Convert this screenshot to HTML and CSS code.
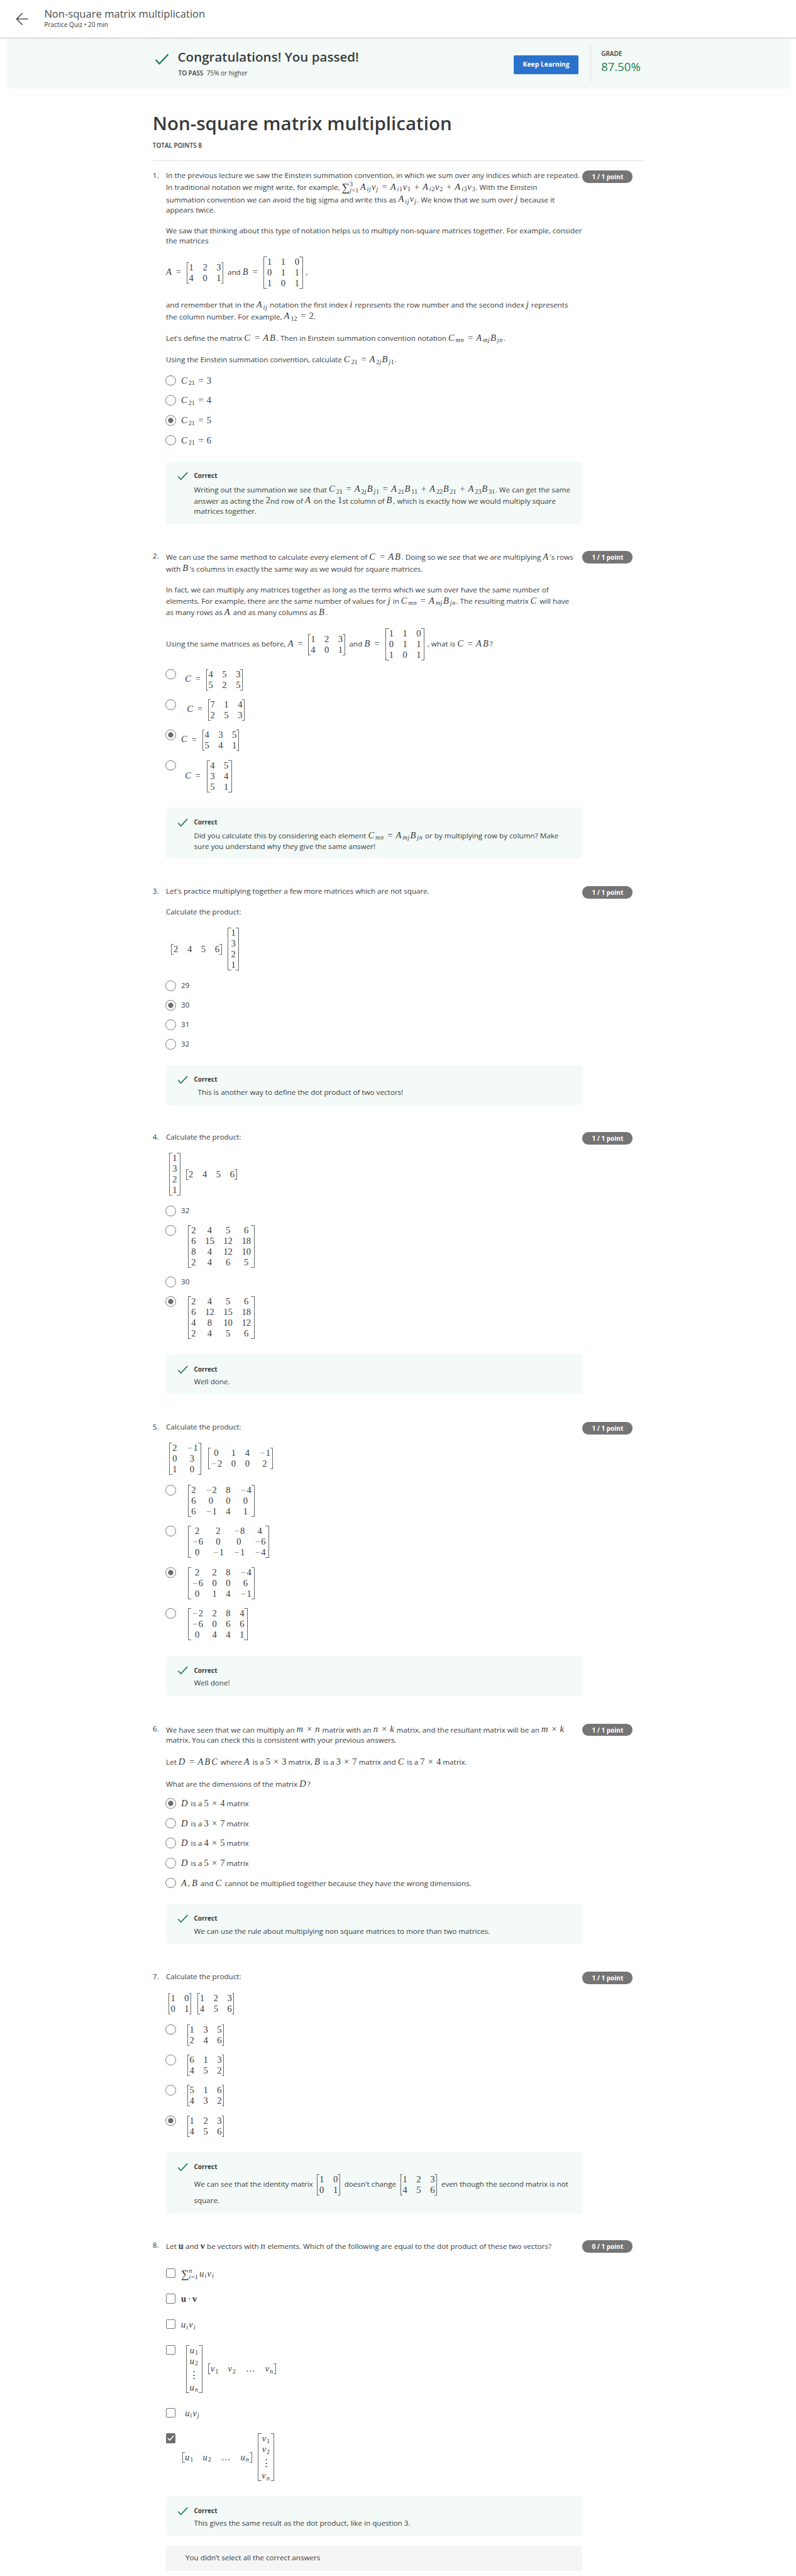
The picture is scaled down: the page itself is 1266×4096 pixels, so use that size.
FILE: index.html
```html
<!DOCTYPE html>
<html lang="en">
<head>
<meta charset="utf-8">
<title>Non-square matrix multiplication</title>
<link rel="stylesheet" href="styles.css">
</head>
<body>
<svg width="0" height="0" class="defs"><symbol id="check" viewBox="0 0 18 15"><path d="M1 8.2 L5.6 13.2 L17 1.2" fill="none" stroke="currentColor" stroke-width="1.8"/></symbol></svg>
<div class="page">
  <header class="topbar">
    <svg class="back" viewBox="0 0 22 22"><path d="M11.5 1 L1.5 11 L11.5 21 M1.5 11 H21.5" fill="none" stroke="currentColor" stroke-width="1.4"/></svg>
    <div>
      <div class="topbar-title">Non-square matrix multiplication</div>
      <div class="topbar-sub">Practice Quiz • 20 min</div>
    </div>
  </header>

  <div class="banner">
    <svg class="banner-check"><use href="#check"/></svg>
    <div class="banner-text">
      <div class="banner-title">Congratulations! You passed!</div>
      <div class="banner-sub"><b>TO PASS</b> 75% or higher</div>
    </div>
    <div class="button">Keep Learning</div>
    <div class="grade"><div class="grade-label">GRADE</div><div class="grade-value">87.50%</div></div>
  </div>

  <main>
    <h1>Non-square matrix multiplication</h1>
    <div class="total">TOTAL POINTS 8</div>

    <section class="question q1">
      <div class="num">1.</div>
      <div class="body">
        <div class="prompt">
          <p>In the previous lecture we saw the Einstein summation convention, in which we sum over any indices which are repeated.<br>In traditional notation we might write, for example, <span class="math">∑_{j=1}^3A_{ij}v_j=A_{i1}v_1+A_{i2}v_2+A_{i3}v_3</span>. With the Einstein<br>summation convention we can avoid the big sigma and write this as <span class="math">A_{ij}v_j</span>. We know that we sum over <span class="math">j</span> because it<br>appears twice.</p>
          <p>We saw that thinking about this type of notation helps us to multiply non-square matrices together. For example, consider<br>the matrices</p>
          <p><span class="math">A=[1 2 3;4 0 1]</span> and <span class="math">B=[1 1 0;0 1 1;1 0 1]</span>,</p>
          <p>and remember that in the <span class="math">A_{ij}</span> notation the first index <span class="math">i</span> represents the row number and the second index <span class="math">j</span> represents<br>the column number. For example, <span class="math">A_{12}=2</span>.</p>
          <p>Let's define the matrix <span class="math">C=AB</span>. Then in Einstein summation convention notation <span class="math">C_{mn}=A_{mj}B_{jn}</span>.</p>
          <p>Using the Einstein summation convention, calculate <span class="math">C_{21}=A_{2j}B_{j1}</span>.</p>
        </div>
        <div class="options">
          <div class="opt"><i class="radio"></i><div class="label"><span class="math">C_{21}=3</span></div></div>
          <div class="opt"><i class="radio"></i><div class="label"><span class="math">C_{21}=4</span></div></div>
          <div class="opt"><i class="radio on"></i><div class="label"><span class="math">C_{21}=5</span></div></div>
          <div class="opt"><i class="radio"></i><div class="label"><span class="math">C_{21}=6</span></div></div>
        </div>
        <div class="feedback"><svg><use href="#check"/></svg><div><b>Correct</b><div>Writing out the summation we see that <span class="math">C_{21}=A_{2j}B_{j1}=A_{21}B_{11}+A_{22}B_{21}+A_{23}B_{31}</span>. We can get the same<br>answer as acting the <span class="math">2</span>nd row of <span class="math">A</span> on the <span class="math">1</span>st column of <span class="math">B</span>, which is exactly how we would multiply square<br>matrices together.</div></div></div>
      </div>
      <div class="points">1 / 1 point</div>
    </section>

    <section class="question q2">
      <div class="num">2.</div>
      <div class="body">
        <div class="prompt">
          <p>We can use the same method to calculate every element of <span class="math">C=AB</span>. Doing so we see that we are multiplying <span class="math">A</span>'s rows<br>with <span class="math">B</span>'s columns in exactly the same way as we would for square matrices.</p>
          <p>In fact, we can multiply any matrices together as long as the terms which we sum over have the same number of<br>elements. For example, there are the same number of values for <span class="math">j</span> in <span class="math">C_{mn}=A_{mj}B_{jn}</span>. The resulting matrix <span class="math">C</span> will have<br>as many rows as <span class="math">A</span> and as many columns as <span class="math">B</span>.</p>
          <p>Using the same matrices as before, <span class="math">A=[1 2 3;4 0 1]</span> and <span class="math">B=[1 1 0;0 1 1;1 0 1]</span>, what is <span class="math">C=AB</span>?</p>
        </div>
        <div class="options">
          <div class="opt"><i class="radio"></i><div class="label">&nbsp; <span class="math">C=[4 5 3;5 2 5]</span></div></div>
          <div class="opt"><i class="radio"></i><div class="label">&nbsp; &nbsp;<span class="math">C=[7 1 4;2 5 3]</span></div></div>
          <div class="opt"><i class="radio on"></i><div class="label"><span class="math">C=[4 3 5;5 4 1]</span></div></div>
          <div class="opt"><i class="radio"></i><div class="label">&nbsp; <span class="math">C=[4 5;3 4;5 1]</span></div></div>
        </div>
        <div class="feedback"><svg><use href="#check"/></svg><div><b>Correct</b><div>Did you calculate this by considering each element <span class="math">C_{mn}=A_{mj}B_{jn}</span> or by multiplying row by column? Make<br>sure you understand why they give the same answer!</div></div></div>
      </div>
      <div class="points">1 / 1 point</div>
    </section>

    <section class="question q3">
      <div class="num">3.</div>
      <div class="body">
        <div class="prompt">
          <p>Let's practice multiplying together a few more matrices which are not square.</p>
          <p>Calculate the product:</p>
          <p>&nbsp; <span class="math">[2 4 5 6] [1;3;2;1]</span></p>
        </div>
        <div class="options">
          <div class="opt"><i class="radio"></i><div class="label">29</div></div>
          <div class="opt"><i class="radio on"></i><div class="label">30</div></div>
          <div class="opt"><i class="radio"></i><div class="label">31</div></div>
          <div class="opt"><i class="radio"></i><div class="label">32</div></div>
        </div>
        <div class="feedback"><svg><use href="#check"/></svg><div><b>Correct</b><div>&nbsp; This is another way to define the dot product of two vectors!</div></div></div>
      </div>
      <div class="points">1 / 1 point</div>
    </section>

    <section class="question q4">
      <div class="num">4.</div>
      <div class="body">
        <div class="prompt">
          <p>Calculate the product:</p>
          <p><span class="math">[1;3;2;1] [2 4 5 6]</span></p>
        </div>
        <div class="options">
          <div class="opt"><i class="radio"></i><div class="label">32</div></div>
          <div class="opt"><i class="radio"></i><div class="label">&nbsp; <span class="math">[2 4 5 6;6 15 12 18;8 4 12 10;2 4 6 5]</span></div></div>
          <div class="opt"><i class="radio"></i><div class="label">30</div></div>
          <div class="opt"><i class="radio on"></i><div class="label">&nbsp; <span class="math">[2 4 5 6;6 12 15 18;4 8 10 12;2 4 5 6]</span></div></div>
        </div>
        <div class="feedback"><svg><use href="#check"/></svg><div><b>Correct</b><div>Well done.</div></div></div>
      </div>
      <div class="points">1 / 1 point</div>
    </section>

    <section class="question q5">
      <div class="num">5.</div>
      <div class="body">
        <div class="prompt">
          <p>Calculate the product:</p>
          <p><span class="math">[2 −1;0 3;1 0] [0 1 4 −1;−2 0 0 2]</span></p>
        </div>
        <div class="options">
          <div class="opt"><i class="radio"></i><div class="label">&nbsp; <span class="math">[2 −2 8 −4;6 0 0 0;6 −1 4 1]</span></div></div>
          <div class="opt"><i class="radio"></i><div class="label">&nbsp; <span class="math">[2 2 −8 4;−6 0 0 −6;0 −1 −1 −4]</span></div></div>
          <div class="opt"><i class="radio on"></i><div class="label">&nbsp; <span class="math">[2 2 8 −4;−6 0 0 6;0 1 4 −1]</span></div></div>
          <div class="opt"><i class="radio"></i><div class="label">&nbsp; <span class="math">[−2 2 8 4;−6 0 6 6;0 4 4 1]</span></div></div>
        </div>
        <div class="feedback"><svg><use href="#check"/></svg><div><b>Correct</b><div>Well done!</div></div></div>
      </div>
      <div class="points">1 / 1 point</div>
    </section>

    <section class="question q6">
      <div class="num">6.</div>
      <div class="body">
        <div class="prompt">
          <p>We have seen that we can multiply an <span class="math">m×n</span> matrix with an <span class="math">n×k</span> matrix, and the resultant matrix will be an <span class="math">m×k</span><br>matrix. You can check this is consistent with your previous answers.</p>
          <p>Let <span class="math">D=ABC</span> where <span class="math">A</span> is a <span class="math">5×3</span> matrix, <span class="math">B</span> is a <span class="math">3×7</span> matrix and <span class="math">C</span> is a <span class="math">7×4</span> matrix.</p>
          <p>What are the dimensions of the matrix <span class="math">D</span>?</p>
        </div>
        <div class="options">
          <div class="opt"><i class="radio on"></i><div class="label"><span class="math">D</span> is a <span class="math">5×4</span> matrix</div></div>
          <div class="opt"><i class="radio"></i><div class="label"><span class="math">D</span> is a <span class="math">3×7</span> matrix</div></div>
          <div class="opt"><i class="radio"></i><div class="label"><span class="math">D</span> is a <span class="math">4×5</span> matrix</div></div>
          <div class="opt"><i class="radio"></i><div class="label"><span class="math">D</span> is a <span class="math">5×7</span> matrix</div></div>
          <div class="opt"><i class="radio"></i><div class="label"><span class="math">A</span>, <span class="math">B</span> and <span class="math">C</span> cannot be multiplied together because they have the wrong dimensions.</div></div>
        </div>
        <div class="feedback"><svg><use href="#check"/></svg><div><b>Correct</b><div>We can use the rule about multiplying non square matrices to more than two matrices.</div></div></div>
      </div>
      <div class="points">1 / 1 point</div>
    </section>

    <section class="question q7">
      <div class="num">7.</div>
      <div class="body">
        <div class="prompt">
          <p>Calculate the product:</p>
          <p><span class="math">[1 0;0 1] [1 2 3;4 5 6]</span></p>
        </div>
        <div class="options">
          <div class="opt"><i class="radio"></i><div class="label">&nbsp; <span class="math">[1 3 5;2 4 6]</span></div></div>
          <div class="opt"><i class="radio"></i><div class="label">&nbsp; <span class="math">[6 1 3;4 5 2]</span></div></div>
          <div class="opt"><i class="radio"></i><div class="label">&nbsp; <span class="math">[5 1 6;4 3 2]</span></div></div>
          <div class="opt"><i class="radio on"></i><div class="label">&nbsp; <span class="math">[1 2 3;4 5 6]</span></div></div>
        </div>
        <div class="feedback"><svg><use href="#check"/></svg><div><b>Correct</b><div>We can see that the identity matrix <span class="math">[1 0;0 1]</span> doesn't change <span class="math">[1 2 3;4 5 6]</span> even though the second matrix is not<br>square.</div></div></div>
      </div>
      <div class="points">1 / 1 point</div>
    </section>

    <section class="question q8">
      <div class="num">8.</div>
      <div class="body">
        <div class="prompt">
          <p>Let <span class="math">*u</span> and <span class="math">*v</span> be vectors with <span class="math">n</span> elements. Which of the following are equal to the dot product of these two vectors?</p>
        </div>
        <div class="options">
          <div class="opt"><i class="box"></i><div class="label"><span class="math">∑_{i=1}^nu_iv_i</span></div></div>
          <div class="opt"><i class="box"></i><div class="label"><span class="math">*u·*v</span></div></div>
          <div class="opt"><i class="box"></i><div class="label"><span class="math">u_iv_i</span></div></div>
          <div class="opt"><i class="box"></i><div class="label">&nbsp;<span class="math">[u_1;u_2;⋮;u_n] [v_1 v_2 … v_n]</span></div></div>
          <div class="opt"><i class="box"></i><div class="label">&nbsp; <span class="math">u_iv_j</span></div></div>
          <div class="opt"><i class="box on"><svg viewBox="0 0 16 16"><path d="M3 8.5 L6.5 12 L13.5 4" fill="none" stroke="#fff" stroke-width="1.6"/></svg></i><div class="label"><span class="math">[u_1 u_2 … u_n] [v_1;v_2;⋮;v_n]</span></div></div>
        </div>
        <div class="feedback"><svg><use href="#check"/></svg><div><b>Correct</b><div>This gives the same result as the dot product, like in question 3.</div></div></div>
        <div class="notice">You didn’t select all the correct answers</div>
      </div>
      <div class="points">0 / 1 point</div>
    </section>
  </main>
</div>
<script src="math.js"></script>
</body>
</html>
```
FILE: styles.css
```css
* { box-sizing: border-box; }
html, body { margin: 0; background: #fff; overflow: hidden; }
.defs { position: absolute; }
.page {
  zoom: 0.9265;
  width: 1366.4px;
  height: 4421px;
  overflow: hidden;
  font: 12.6px/18px "Open Sans", sans-serif;
  color: #373a3c;
}

.topbar { height: 66px; border-bottom: 1px solid #bdbdbd; display: flex; align-items: flex-start; padding-left: 27px; gap: 27px; }
.back { width: 22px; height: 22px; margin-top: 21.5px; color: #333; }
.topbar-title { font-size: 17.9px; line-height: 24px; margin-top: 12px; font-weight: 400; color: #4a4d50; }
.topbar-sub { font-size: 10.8px; line-height: 14px; }

.banner { height: 86px; margin: 0 11px; background: #f3faf7; display: flex; align-items: flex-start; padding-left: 254px; }
.banner-check { width: 25px; height: 20px; margin-top: 26px; color: #1d7c50; }
.banner-text { margin-left: 15px; width: 577px; }
.banner-title { font-size: 22.2px; font-weight: 600; line-height: 30px; margin-top: 17px; color: #373a3c; }
.banner-sub { font-size: 10.8px; line-height: 16px; margin: 5px 0 0 1px; }
.banner-sub b { font-weight: 600; margin-right: 3px; }
.button { width: 111px; height: 32px; margin-top: 29px; background: #2a73cc; color: #fff; border-radius: 2px; font-size: 11.2px; font-weight: 700; line-height: 32px; text-align: center; }
.grade { margin: 12px 0 0 21px; padding: 6px 0 0 17px; height: 62px; border-left: 1px solid #ddd; }
.grade-label { font-size: 10.8px; font-weight: 600; line-height: 17px; }
.grade-value { font-size: 20px; line-height: 26px; color: #1f8354; }

main { width: 842px; margin-left: 262px; }
h1 { margin: 0; padding-top: 38px; font-size: 31.9px; line-height: 44px; font-weight: 600; color: #373a3c; }
.total { font-size: 10.8px; font-weight: 600; line-height: 16px; margin-top: 8px; height: 34px; border-bottom: 1px solid #e1e1e1; margin-bottom: 17px; }

.question { display: flex; align-items: flex-start; }
.q1 { height: 653px; } .q1 .prompt { height: 351px; }
.q2 { height: 574.4px; } .q2 .prompt { height: 202px; }
.q3 { height: 422.6px; } .q3 .prompt { height: 162.6px; }
.q4 { height: 497px; } .q4 .prompt { height: 126px; }
.q5 { height: 518px; } .q5 .prompt { height: 108.5px; }
.q6 { height: 426px; } .q6 .prompt { height: 128px; }
.q7 { height: 461px; } .q7 .prompt { height: 90px; }
.q8 { height: 576px; } .q8 .prompt { height: 48px; }
.num { width: 23px; }
.body { width: 715px; }
.points { width: 86px; height: 21.5px; border-radius: 10.5px; background: #757575; color: #fff; font-size: 10.8px; line-height: 22px; font-weight: 700; text-align: center; }

p { margin: 0 0 18px; white-space: nowrap; }
.q1 p { margin-bottom: 17.5px; }
.options { padding-bottom: 11px; }
.opt { display: flex; align-items: flex-start; gap: 9px; padding-bottom: 15.5px; margin-left: -1px; }
.label { min-height: 17.6px; line-height: 17.6px; white-space: nowrap; }
.radio { width: 18px; height: 18px; flex: none; border: 2px solid #757575; border-radius: 50%; background: #fff; }
.radio.on { background: radial-gradient(circle, #6c6c6c 4.2px, #fff 4.8px); }
.q1 .label, .q6 .label { min-height: 18.6px; }
.q8 .options { padding-bottom: 0; }
.q8 .opt { padding-bottom: 25.8px; margin-left: 0; gap: 10px; }
.q8 .label { min-height: 17.7px; line-height: 17px; }
.box { width: 16px; height: 16.5px; flex: none; border: 1.6px solid #757575; border-radius: 2px; }
.box.on { background: #6f6f6f; border: 0; }
.box svg { display: block; width: 16px; height: 16px; }

.feedback { background: #f3faf7; padding: 16px 0 12px 19px; display: flex; gap: 10px; white-space: nowrap; }
.feedback svg { width: 19px; height: 15px; margin-top: 2px; color: #1d7c50; }
.feedback b { display: block; font-size: 10.8px; font-weight: 700; line-height: 18px; margin-bottom: 4px; }
.notice { margin-top: 17.5px; height: 43px; line-height: 42px; padding-left: 33.5px; background: #f5f5f5; }

/* formulas */
.math { display: inline-block; font: 15.73px/18.6px "Liberation Serif", serif; white-space: nowrap; padding-top: .6px; }
.math:has(.mx) { padding-top: 0; }
.label .math { padding-top: 0; line-height: 17.6px; }
.math .it { font-style: italic; letter-spacing: .06em; }
.math .cap { letter-spacing: .13em; }
.math .bf { font-weight: 700; }
.math .op { display: inline-block; width: .778em; text-align: center; margin: 0 .24em; }
.math .dot { width: .278em; margin: 0 .2em; }
.math .neg { margin: 0; color: #888; }
.math .sub { font-size: .7em; line-height: 0; position: relative; top: .25em; margin-right: .06em; }
.math .sub .op { margin: 0; }
.math .sum { display: inline-flex; align-items: center; vertical-align: middle; height: 20px; margin-right: .17em; }
.label .math .sum { height: 14px; }
.math .sum > b { font-weight: 400; font-size: 1.2em; }
.math .lims { display: flex; flex-direction: column; font-size: .7em; line-height: 11.5px; }
.math .thin { display: inline-block; width: .167em; }
.math .dots { display: inline-block; width: 1.17em; letter-spacing: .05em; }
.mx { display: inline-flex; vertical-align: middle; margin: 0 4px; }
.mx > i { width: 4px; border: 1px solid #666; border-right: 0; }
.mx > i:last-child { border: 1px solid #666; border-left: 0; }
.cells { display: grid; column-gap: 1em; text-align: center; grid-auto-rows: 18.35px; line-height: 18.35px; }
.r1 { margin: 0 2.5px; }
.r3, .r4 { margin: 0 5px; }
.r3 > i, .r4 > i { width: 6px; }
.tall .cells { grid-template-rows: 18.35px 18.35px 27px 18.35px; }
.tall .cells > :nth-child(3) { line-height: 29px; }
```
FILE: math.js
```js
// Small typesetter for the inline formulas: X_{..} subscripts, [a b;c d] matrices, *x bold.
function group(src, i) {
  if (src[i] !== '{') return [src[i], i + 1];
  const end = src.indexOf('}', i);
  return [src.slice(i + 1, end), end + 1];
}

function matrix(body) {
  const rows = body.split(';').map(r => r.split(' '));
  const tall = body.includes('⋮') ? ' tall' : '';
  const cells = rows.flat().map(c => '<span>' + typeset(c) + '</span>').join('');
  return `<span class="mx r${rows.length}${tall}"><i></i><span class="cells" style="grid-template-columns:repeat(${rows[0].length},auto)">${cells}</span><i></i></span>`;
}

function typeset(src) {
  let out = '';
  let i = 0;
  while (i < src.length) {
    const c = src[i];
    if (c === '[') {
      const end = src.indexOf(']', i);
      out += matrix(src.slice(i + 1, end));
      i = end + 1;
    } else if (c === '∑') {
      const [low, a] = group(src, i + 2);
      const [high, b] = group(src, a + 1);
      out += `<span class="sum"><b>∑</b><span class="lims"><span>${typeset(high)}</span><span>${low.replace(/[a-z]/, '<span class="it">$&</span>')}</span></span></span>`;
      i = b;
    } else if (c === '_') {
      const [low, next] = group(src, i + 1);
      out += `<span class="sub">${typeset(low)}</span>`;
      i = next;
    } else if (c === '*') {
      out += `<span class="bf">${src[i + 1]}</span>`;
      i += 2;
    } else {
      if (c === ' ') out += '<span class="thin"></span>';
      else if (c === '−') out += '<span class="op neg">−</span>';
      else if (c === '·') out += '<span class="op dot">·</span>';
      else if (c === '…') out += '<span class="dots">…</span>';
      else if ('=+×'.includes(c)) out += `<span class="op">${c}</span>`;
      else if (/[A-Z]/.test(c)) out += `<span class="it cap">${c}</span>`;
      else if (/[a-z]/.test(c)) out += `<span class="it">${c}</span>`;
      else out += c;
      i++;
    }
  }
  return out;
}

document.querySelectorAll('.math').forEach(el => { el.innerHTML = typeset(el.textContent); });
```
